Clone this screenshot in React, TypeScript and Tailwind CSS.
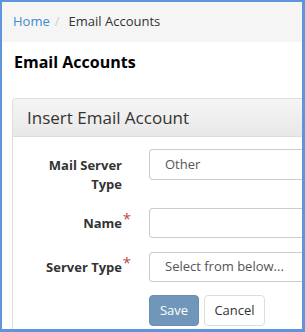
import React from "react";

export default function App() {
  return (
    <div
      className="w-[305px] h-[332px] overflow-hidden border-t-2 border-l-2 border-r-[3px] border-b-[3px] border-[#5f94da] bg-white"
      style={{ fontFamily: '"Open Sans", sans-serif' }}
    >
      <div className="h-[40px] bg-[#f5f5f5] flex items-center pl-[11px] text-[13px]">
        <span className="text-[#428bca]">Home</span>
        <span className="text-[#ccc] pl-[5px] pr-[9px]">/</span>
        <span className="text-[#333]">Email Accounts</span>
      </div>
      <div className="pl-[10px]">
        <h1 className="text-[16px] font-bold text-black pt-[9px] pl-[2px] leading-[22px]">Email Accounts</h1>
        <div className="mt-[25px] border border-[#dddddd] border-r-0 rounded-tl-[4px] w-[300px]">
          <div className="h-[38px] flex items-center pl-[14px] bg-gradient-to-b from-[#f5f5f5] to-[#e8e8e8] border-b border-[#dddddd] rounded-tl-[4px] text-[17px] text-[#333]">
            Insert Email Account
          </div>
          <div className="pt-[12px] pb-[10px]">
            <div className="flex items-start">
              <div className="w-[109px] text-right text-[13px] font-bold text-[#333] leading-[19px] pt-[7px]">
                Mail Server
                <br />
                Type
              </div>
              <div className="ml-[27px] h-[31px] flex-1 border border-[#cccccc] border-r-0 rounded-l-[4px] flex items-center pl-[15px] text-[13px] text-[#555]">
                Other
              </div>
            </div>
            <div className="flex items-center mt-[14px]">
              <div className="w-[109px] text-right text-[13px] font-bold text-[#333] leading-[19px] relative">
                Name
                <span className="absolute right-[-9px] top-[-5px] text-[#b94a48] text-[15px] font-normal">*</span>
              </div>
              <div className="ml-[27px] h-[30px] flex-1 border border-[#cccccc] border-r-0 rounded-l-[4px]" />
            </div>
            <div className="flex items-center mt-[14px]">
              <div className="w-[109px] text-right text-[13px] font-bold text-[#333] leading-[19px] relative">
                Server Type
                <span className="absolute right-[-9px] top-[-5px] text-[#b94a48] text-[15px] font-normal">*</span>
              </div>
              <div className="ml-[27px] h-[30px] flex-1 border border-[#cccccc] border-r-0 rounded-l-[4px] flex items-center pl-[15px] text-[13px] text-[#555]">
                Select from below...
              </div>
            </div>
            <div className="flex mt-[13px] ml-[136px] gap-[5px]">
              <button className="h-[31px] w-[50px] rounded-[4px] bg-[#7097b9] text-white text-[13px] border border-[#6890b2]">
                Save
              </button>
              <button className="h-[31px] w-[61px] rounded-[4px] bg-white text-[#333] text-[13px] border border-[#dddddd]">
                Cancel
              </button>
            </div>
          </div>
        </div>
      </div>
    </div>
  );
}
